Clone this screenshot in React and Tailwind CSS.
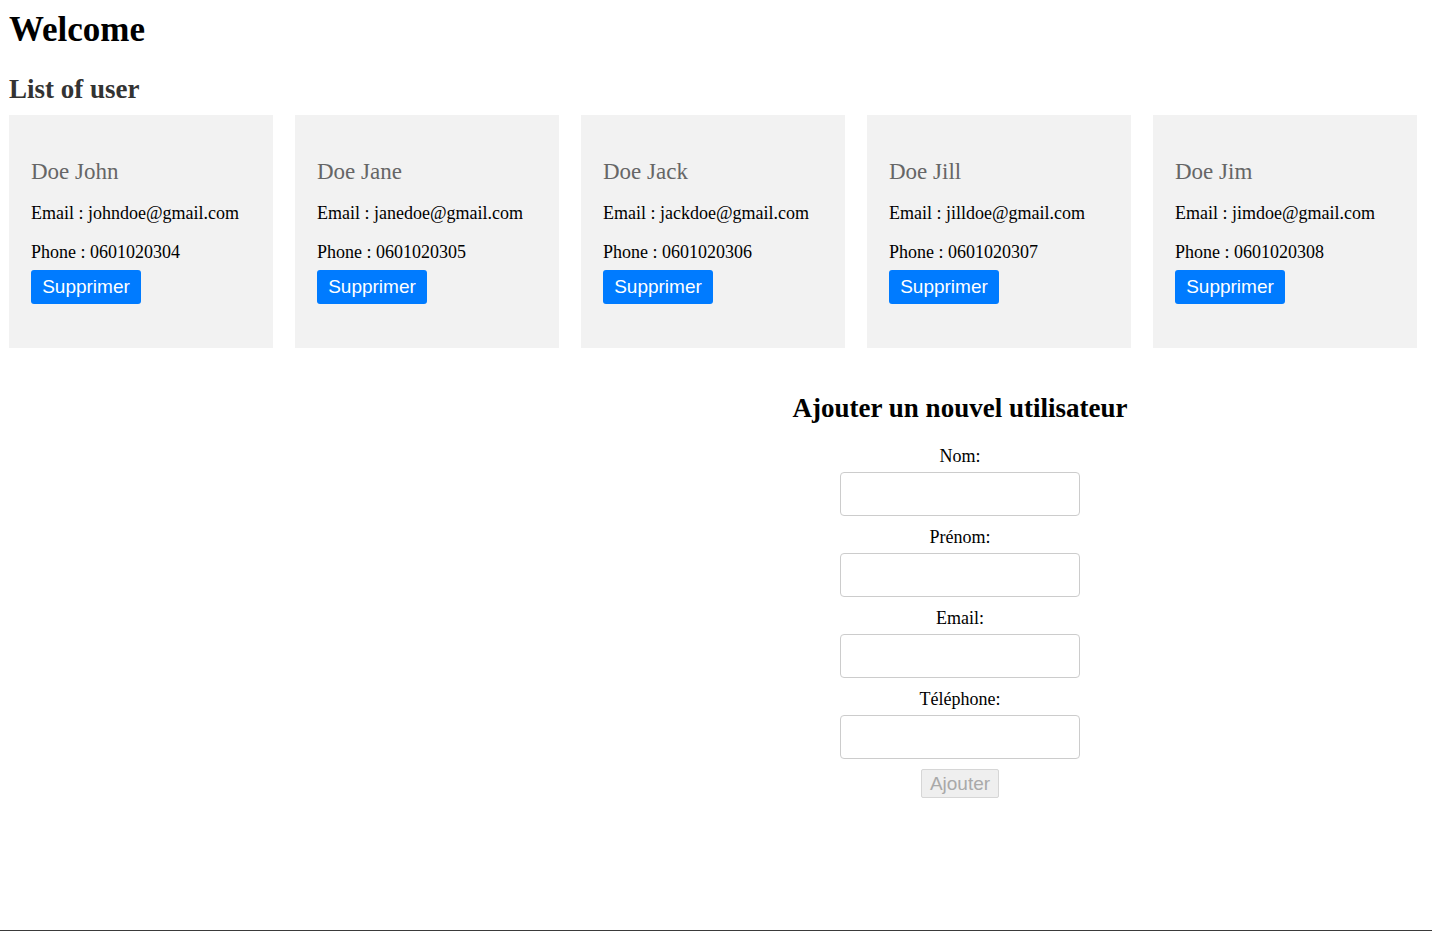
import React, { useState } from "react";

const initialUsers = [
  { id: 1, nom: "Doe", prenom: "John", email: "johndoe@gmail.com", phone: "0601020304" },
  { id: 2, nom: "Doe", prenom: "Jane", email: "janedoe@gmail.com", phone: "0601020305" },
  { id: 3, nom: "Doe", prenom: "Jack", email: "jackdoe@gmail.com", phone: "0601020306" },
  { id: 4, nom: "Doe", prenom: "Jill", email: "jilldoe@gmail.com", phone: "0601020307" },
  { id: 5, nom: "Doe", prenom: "Jim", email: "jimdoe@gmail.com", phone: "0601020308" },
];

const UserCard = ({ user, onDelete }) => (
  <div className="w-[264px] bg-[#f2f2f2] px-[22px] pt-[44px] pb-[44px]">
    <h3 className="text-[23px] leading-[26px] font-normal text-[#666]">
      {user.nom} {user.prenom}
    </h3>
    <p className="mt-[18px] leading-[21px]">Email : {user.email}</p>
    <p className="mt-[18px] leading-[21px]">Phone : {user.phone}</p>
    <button
      onClick={() => onDelete(user.id)}
      className="mt-[7px] h-[34px] w-[110px] rounded-[3px] bg-[#007bff] font-['Liberation_Sans',Arial,sans-serif] text-[19px] text-white"
    >
      Supprimer
    </button>
  </div>
);

const Field = ({ label, value, onChange, first }) => (
  <div className={first ? "" : "mt-[11px]"}>
    <label className="block leading-[21px]">{label}</label>
    <input
      value={value}
      onChange={(e) => onChange(e.target.value)}
      className="mt-[5px] h-[44px] w-[240px] rounded-[4px] border border-[#ccc] bg-white px-2"
    />
  </div>
);

const App = () => {
  const [users, setUsers] = useState(initialUsers);
  const [form, setForm] = useState({ nom: "", prenom: "", email: "", phone: "" });

  const handleDelete = (id) => {
    setUsers(users.filter((u) => u.id !== id));
  };

  const canSubmit = form.nom && form.prenom && form.email && form.phone;

  const handleSubmit = (e) => {
    e.preventDefault();
    if (!canSubmit) return;
    setUsers([...users, { id: Date.now(), ...form }]);
    setForm({ nom: "", prenom: "", email: "", phone: "" });
  };

  return (
    <div className="flex min-h-screen flex-col bg-white font-['Liberation_Serif','Times_New_Roman',serif] text-[18px] text-black">
      <div className="flex-1 px-[9px]">
        <h1 className="pt-[10px] text-[35px] leading-[39px] font-bold">Welcome</h1>
        <h2 className="mt-[25px] text-[27px] leading-[31px] font-bold text-[#333]">List of user</h2>
        <div className="mt-[10px] flex gap-[22px]">
          {users.map((user) => (
            <UserCard key={user.id} user={user} onDelete={handleDelete} />
          ))}
        </div>

        <div className="mt-[45px] flex justify-end">
          <form onSubmit={handleSubmit} className="flex w-[926px] flex-col items-center text-center">
            <h2 className="text-[27px] leading-[31px] font-bold">Ajouter un nouvel utilisateur</h2>
            <div className="mt-[22px]">
              <Field first label="Nom:" value={form.nom} onChange={(v) => setForm({ ...form, nom: v })} />
              <Field label="Prénom:" value={form.prenom} onChange={(v) => setForm({ ...form, prenom: v })} />
              <Field label="Email:" value={form.email} onChange={(v) => setForm({ ...form, email: v })} />
              <Field label="Téléphone:" value={form.phone} onChange={(v) => setForm({ ...form, phone: v })} />
            </div>
            <button
              type="submit"
              disabled={!canSubmit}
              className="mt-[10px] h-[29px] w-[78px] rounded-[2px] border border-[#d6d6d6] bg-[#efefef] font-['Liberation_Sans',Arial,sans-serif] text-[19px] text-[#a9a9a9]"
            >
              Ajouter
            </button>
          </form>
        </div>
      </div>
      <div className="h-px bg-[#3a3a3a]" />
    </div>
  );
};

export default App;
